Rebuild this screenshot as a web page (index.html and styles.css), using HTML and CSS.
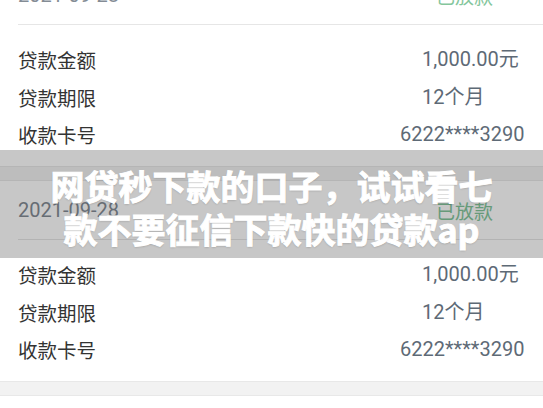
FILE: index.html
```html
<!DOCTYPE html>
<html>
<head>
    <meta charset="utf-8">
    <title>贷款记录</title>
    <link rel="stylesheet" href="styles.css">
</head>
<body>
    <div class="list">
        <div class="card">
            <div class="card-head">
                <span class="date">2021-09-28</span>
                <span class="status">已放款</span>
            </div>
            <div class="rows">
                <div class="row"><span class="label">贷款金额</span><span class="value">1,000.00元</span></div>
                <div class="row"><span class="label">贷款期限</span><span class="value">12个月</span></div>
                <div class="row"><span class="label">收款卡号</span><span class="value card-no">6222****3290</span></div>
            </div>
        </div>
        <div class="gap"></div>
        <div class="card">
            <div class="card-head">
                <span class="date">2021-09-28</span>
                <span class="status">已放款</span>
            </div>
            <div class="rows">
                <div class="row"><span class="label">贷款金额</span><span class="value">1,000.00元</span></div>
                <div class="row"><span class="label">贷款期限</span><span class="value">12个月</span></div>
                <div class="row"><span class="label">收款卡号</span><span class="value card-no">6222****3290</span></div>
            </div>
        </div>
        <div class="gap"></div>
    </div>

    <div class="banner">
        <h1>网贷秒下款的口子，试试看七款不要征信下款快的贷款ap</h1>
    </div>
</body>
</html>
```

FILE: styles.css
```css
body {
    margin: 0;
    background: #fff;
    font-family: "Noto Sans CJK SC", sans-serif;
    overflow: hidden;
}

.list {
    margin-top: -34px;
}

.card {
    background: #fff;
    height: 200px;
}

.card-head {
    display: flex;
    justify-content: space-between;
    align-items: center;
    height: 58px;
    margin-left: 18px;
    padding-right: 50px;
    border-bottom: 1px solid #e6e6e6;
}

.date {
    font-family: Roboto, sans-serif;
    font-size: 20px;
    color: #848c95;
}

.status {
    font-size: 19px;
    color: #84c69c;
}

.rows {
    padding: 16px 0 0 18px;
}

.row {
    display: flex;
    height: 37.5px;
    line-height: 37.5px;
}

.label {
    width: 404px;
    font-size: 19.5px;
    color: #333;
}

.value {
    font-family: Roboto, "Noto Sans CJK SC", sans-serif;
    font-size: 20px;
    color: #5e6a76;
    white-space: nowrap;
}

.card-no {
    margin-left: -22px;
}

.gap {
    height: 13px;
    background: #f2f2f2;
    border-top: 1px solid #e8e8e8;
    border-bottom: 1px solid #e8e8e8;
}

.banner {
    position: absolute;
    top: 150px;
    left: 0;
    right: 0;
    height: 108px;
    box-sizing: border-box;
    padding-top: 14px;
    background: rgba(0, 0, 0, 0.22);
}

.banner h1 {
    width: 450px;
    margin: 0 auto;
    font-size: 34px;
    line-height: 43px;
    font-weight: 700;
    color: #fff;
    text-align: center;
    -webkit-text-stroke: 1px #fff;
    text-shadow: 0 1px 2px rgba(0, 0, 0, 0.2);
}
```
